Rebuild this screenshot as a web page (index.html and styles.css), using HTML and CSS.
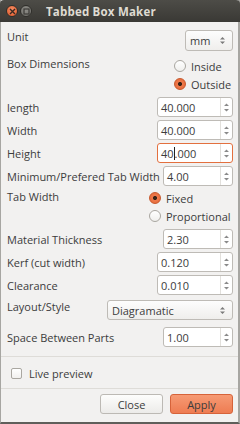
FILE: index.html
```html
<!DOCTYPE html>
<html>
<head>
<meta charset="utf-8">
<link rel="stylesheet" href="styles.css">
</head>
<body>
<div class="window">
  <div class="titlebar">
    <span class="wbtn close"><svg width="7" height="7" viewBox="0 0 7 7"><path d="M1 1L6 6M6 1L1 6" stroke="#3a2a22" stroke-width="1.4"/></svg></span>
    <span class="wbtn min"><svg width="7" height="7" viewBox="0 0 7 7"><rect x="1" y="1" width="5" height="5" fill="none" stroke="#3c3b37" stroke-width="1.2"/></svg></span>
    <span class="title">Tabbed Box Maker</span>
  </div>
  <div class="content">
    <div class="row row-unit">
      <span class="label top">Unit</span>
      <div class="combo combo-mm"><span class="ctext">mm</span><span class="carrows"><svg width="5" height="9" viewBox="0 0 5 9"><path d="M0 3.5L2.5 1L5 3.5Z M0 5.5L2.5 8L5 5.5Z" fill="#7a7a7a"/></svg></span></div>
    </div>
    <div class="row row-dims">
      <span class="label top">Box Dimensions</span>
      <div class="radios radios-dims">
        <div class="radio-item"><span class="radio"></span><span>Inside</span></div>
        <div class="radio-item"><span class="radio checked"></span><span>Outside</span></div>
      </div>
    </div>
    <div class="spinrows first">
      <div class="row row-spin">
        <span class="label">length</span>
        <div class="spin wide"><span class="val">40.000</span><span class="arrows"><svg width="5" height="11" viewBox="0 0 5 11"><path d="M0 4L2.5 1.5L5 4Z M0 7L2.5 9.5L5 7Z" fill="#8a8a8a"/></svg></span></div>
      </div>
      <div class="row row-spin">
        <span class="label">Width</span>
        <div class="spin wide"><span class="val">40.000</span><span class="arrows"><svg width="5" height="11" viewBox="0 0 5 11"><path d="M0 4L2.5 1.5L5 4Z M0 7L2.5 9.5L5 7Z" fill="#8a8a8a"/></svg></span></div>
      </div>
      <div class="row row-spin">
        <span class="label">Height</span>
        <div class="spin wide focus"><span class="val">40<span class="caret"></span>.000</span><span class="arrows"><svg width="5" height="11" viewBox="0 0 5 11"><path d="M0 4L2.5 1.5L5 4Z M0 7L2.5 9.5L5 7Z" fill="#8a8a8a"/></svg></span></div>
      </div>
      <div class="row row-spin">
        <span class="label">Minimum/Prefered Tab Width</span>
        <div class="spin narrow"><span class="val">4.00</span><span class="arrows"><svg width="5" height="11" viewBox="0 0 5 11"><path d="M0 4L2.5 1.5L5 4Z M0 7L2.5 9.5L5 7Z" fill="#8a8a8a"/></svg></span></div>
      </div>
    </div>
    <div class="row row-tab">
      <span class="label top">Tab Width</span>
      <div class="radios radios-tab">
        <div class="radio-item"><span class="radio checked"></span><span>Fixed</span></div>
        <div class="radio-item"><span class="radio"></span><span>Proportional</span></div>
      </div>
    </div>
    <div class="spinrows second">
      <div class="row row-spin">
        <span class="label">Material Thickness</span>
        <div class="spin narrow"><span class="val">2.30</span><span class="arrows"><svg width="5" height="11" viewBox="0 0 5 11"><path d="M0 4L2.5 1.5L5 4Z M0 7L2.5 9.5L5 7Z" fill="#8a8a8a"/></svg></span></div>
      </div>
      <div class="row row-spin">
        <span class="label">Kerf (cut width)</span>
        <div class="spin wide"><span class="val">0.120</span><span class="arrows"><svg width="5" height="11" viewBox="0 0 5 11"><path d="M0 4L2.5 1.5L5 4Z M0 7L2.5 9.5L5 7Z" fill="#8a8a8a"/></svg></span></div>
      </div>
      <div class="row row-spin">
        <span class="label">Clearance</span>
        <div class="spin wide"><span class="val">0.010</span><span class="arrows"><svg width="5" height="11" viewBox="0 0 5 11"><path d="M0 4L2.5 1.5L5 4Z M0 7L2.5 9.5L5 7Z" fill="#8a8a8a"/></svg></span></div>
      </div>
    </div>
    <div class="row row-layout">
      <span class="label top">Layout/Style</span>
      <div class="combo combo-layout"><span class="ctext">Diagramatic</span><span class="carrows"><svg width="5" height="9" viewBox="0 0 5 9"><path d="M0 3.5L2.5 1L5 3.5Z M0 5.5L2.5 8L5 5.5Z" fill="#7a7a7a"/></svg></span></div>
    </div>
    <div class="row row-spin row-space">
      <span class="label">Space Between Parts</span>
      <div class="spin narrow"><span class="val">1.00</span><span class="arrows"><svg width="5" height="11" viewBox="0 0 5 11"><path d="M0 4L2.5 1.5L5 4Z M0 7L2.5 9.5L5 7Z" fill="#8a8a8a"/></svg></span></div>
    </div>
  </div>
  <div class="sep sep1"></div>
  <div class="preview">
    <span class="checkbox"></span><span class="label">Live preview</span>
  </div>
  <div class="sep sep2"></div>
  <div class="buttons">
    <button class="btn btn-close">Close</button>
    <button class="btn btn-apply">Apply</button>
  </div>
</div>
</body>
</html>
```

FILE: styles.css
```css
* { box-sizing: border-box; }
html, body { margin: 0; padding: 0; background: #f2f1f0; }
body {
  font-family: "Open Sans", "DejaVu Sans", sans-serif;
  font-size: 11px;
  color: #3c3c3c;
}
.window {
  width: 240px;
  height: 424px;
  background: #f2f1f0;
  border-left: 1px solid #a7a6a2;
  border-right: 2px solid #a7a6a2;
  border-bottom: 2px solid #5f5e5a;
  display: flex;
  flex-direction: column;
}
.titlebar {
  height: 22px;
  background: linear-gradient(#4d4c47, #3a3935);
  border-radius: 4px 4px 0 0;
  margin-left: -1px;
  margin-right: -2px;
  display: flex;
  align-items: center;
  padding-left: 6px;
  flex-shrink: 0;
}
.wbtn {
  width: 12px;
  height: 12px;
  border-radius: 50%;
  display: flex;
  align-items: center;
  justify-content: center;
  margin-right: 2px;
}
.wbtn.close {
  background: radial-gradient(circle at 50% 35%, #f58b62, #e05a2b);
  border: 1px solid #2f2e2a;
}
.wbtn.min {
  background: radial-gradient(circle at 50% 35%, #8e8d88, #6d6c67);
  border: 1px solid #2f2e2a;
}
.title {
  margin-left: 12px;
  font-weight: bold;
  font-size: 11.5px;
  color: #dfdbd2;
  letter-spacing: 0.2px;
}
.content {
  padding: 0 5px 0 6px;
  display: flex;
  flex-direction: column;
}
.row {
  display: flex;
  justify-content: space-between;
  align-items: flex-start;
}
.label { line-height: 13px; white-space: nowrap; }
.row-unit { margin-top: 8px; height: 22px; }
.combo {
  height: 21px;
  border: 1px solid #bebbb6;
  border-radius: 3px;
  background: linear-gradient(#fdfdfd, #efeeec);
  display: flex;
  align-items: center;
  justify-content: space-between;
  padding: 0 7px 0 4px;
  color: #3c3c3c;
}
.combo-mm { width: 48px; }
.combo-layout { width: 126px; }
.carrows { display: flex; align-items: center; }
.row-dims { margin-top: 5px; }
.radios { display: flex; flex-direction: column; }
.radio-item {
  height: 18px;
  display: flex;
  align-items: center;
  gap: 5px;
}
.radio {
  width: 12px;
  height: 12px;
  border-radius: 50%;
  border: 1px solid #a9a6a0;
  background: linear-gradient(#ffffff, #f0efed);
  display: inline-block;
}
.radio.checked {
  border-color: #c8582c;
  background: radial-gradient(circle, #3a2418 0 1.8px, #ef7a4c 2.3px, #e26533 100%);
}
.radios-dims { width: 59px; }
.spinrows { display: flex; flex-direction: column; gap: 3px; }
.spinrows.first { margin-top: 4px; }
.spinrows.second { margin-top: 4px; }
.row-spin { align-items: center; height: 20px; }
.spin {
  height: 20px;
  border: 1px solid #bebbb6;
  border-radius: 3px;
  background: #ffffff;
  display: flex;
  align-items: stretch;
}
.spin.wide { width: 76px; }
.spin.narrow { width: 70px; }
.spin.focus { border-color: #e3703f; }
.spin .val {
  flex: 1;
  padding-left: 3px;
  display: flex;
  align-items: center;
}
.caret {
  display: inline-block;
  width: 1px;
  height: 13px;
  background: #222;
}
.arrows {
  width: 12px;
  border-left: 1px solid #e2e0dc;
  display: flex;
  align-items: center;
  justify-content: center;
}
.row-tab { margin-top: 3px; }
.radios-tab { width: 84px; }
.row-tab .label { margin-top: 1px; }
.row-layout { margin-top: 5px; height: 20px; }
.row-layout .combo { height: 20px; }
.row-space { margin-top: 7px; }
.sep { height: 1px; background: #dedcd8; flex-shrink: 0; }
.sep1 { margin-top: 9px; }
.preview {
  height: 31px;
  display: flex;
  align-items: center;
  padding: 2px 0 0 10px;
  gap: 7px;
}
.checkbox {
  width: 11px;
  height: 11px;
  border: 1px solid #aaa7a1;
  border-radius: 2px;
  background: linear-gradient(#ffffff, #f1f0ee);
}
.buttons {
  display: flex;
  justify-content: flex-end;
  gap: 7px;
  padding: 5px 5px 0 0;
}
.btn {
  font-family: inherit;
  font-size: 11px;
  height: 20px;
  width: 63px;
  border-radius: 3px;
  padding: 0;
  color: #3c3c3c;
}
.btn-close {
  background: linear-gradient(#fdfdfc, #ecebe9);
  border: 1px solid #bcb9b4;
}
.btn-apply {
  background: linear-gradient(#f69a74, #ee7c52);
  border: 1px solid #d6633a;
}
```
